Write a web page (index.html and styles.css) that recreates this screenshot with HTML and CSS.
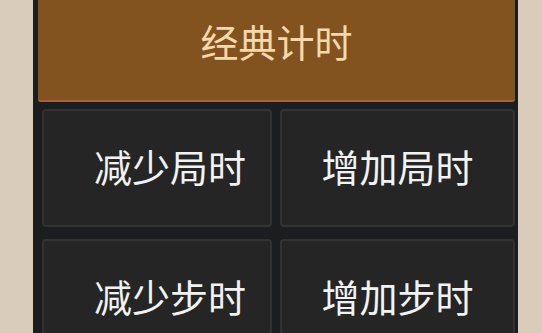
FILE: index.html
```html
<!DOCTYPE html>
<html lang="zh-CN">
<head>
    <meta charset="UTF-8">
    <meta name="viewport" content="width=device-width, initial-scale=1.0">
    <title>计时</title>
    <link rel="stylesheet" href="styles.css">
</head>
<body>
    <div class="panel">
        <div class="mode">经典计时</div>
        <div class="grid">
            <div class="btn left">减少局时</div>
            <div class="btn">增加局时</div>
            <div class="btn left">减少步时</div>
            <div class="btn">增加步时</div>
        </div>
    </div>
</body>
</html>
```

FILE: styles.css
```css
body{
    margin: 0;
    background-color: #d9ccba;
    height: 100vh;
    overflow: hidden;
    font-family: "Noto Sans CJK SC", "Noto Sans", sans-serif;
}

*{
    box-sizing: border-box;
}

.panel{
    margin-left: 33px;
    width: 485px;
    height: 100vh;
    background-color: #1c1d1e;
    padding: 0 3px 0 5px;
}

.mode{
    height: 102px;
    background-color: #83531f;
    border-bottom: 2px solid #a3692b;
    border-radius: 0 0 3px 3px;
    color: #f5d8ab;
    font-size: 38px;
    line-height: 82px;
    text-align: center;
}

.grid{
    display: grid;
    grid-template-columns: 230px 235px;
    grid-auto-rows: 118px;
    column-gap: 8px;
    row-gap: 12px;
    margin-top: 7px;
    padding-left: 4px;
}

.btn{
    background-color: #252525;
    border: 2px solid #323232;
    border-radius: 4px;
    color: #f2f2f2;
    font-size: 38px;
    display: flex;
    align-items: center;
    justify-content: center;
    padding-bottom: 6px;
}

.left{
    padding-left: 26px;
}
```
